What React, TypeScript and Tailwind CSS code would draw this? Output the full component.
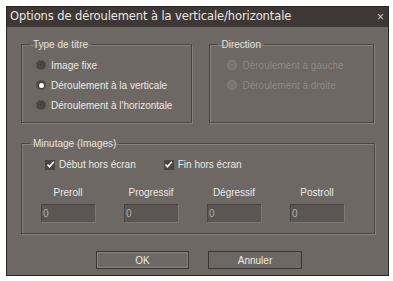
import React from 'react';

const FONT = { fontFamily: '"Liberation Sans", Arial, sans-serif' };

function Radio({
  label,
  checked,
  disabled,
}: {
  label: string;
  checked?: boolean;
  disabled?: boolean;
}) {
  return (
    <div className="flex h-[20px] items-center gap-[5px]">
      <span
        className={`flex h-[10px] w-[10px] items-center justify-center rounded-full ${
          disabled
            ? 'bg-[#7a746f] shadow-[inset_0_0_0_1px_#85807b]'
            : 'bg-[#4a4542] shadow-[inset_0_0_0_1px_#5a5450]'
        }`}
      >
        {checked && <span className="h-[5px] w-[5px] rounded-full bg-white" />}
      </span>
      <span className={disabled ? 'text-[#8d8782]' : 'text-[#ece8e4]'}>
        {label}
      </span>
    </div>
  );
}

function Check({ label }: { label: string }) {
  return (
    <div className="flex items-center gap-[4px]">
      <span className="flex h-[10px] w-[10px] items-center justify-center bg-[#4a4542]">
        <svg width="9" height="9" viewBox="0 0 9 9">
          <path d="M1.5 4.5 L3.5 6.8 L7.8 1.8" fill="none" stroke="#fff" strokeWidth="1.6" />
        </svg>
      </span>
      <span className="text-[#ece8e4]">{label}</span>
    </div>
  );
}

function Group({
  title,
  className,
  children,
}: {
  title: string;
  className?: string;
  children: React.ReactNode;
}) {
  return (
    <fieldset
      className={`border border-[#4b4643] shadow-[1px_1px_0_#86807b,inset_1px_1px_0_#86807b] ${className ?? ''}`}
    >
      <legend className="ml-[8px] px-[3px] leading-[13px] text-[#e4e0dc]">
        {title}
      </legend>
      {children}
    </fieldset>
  );
}

function Field({ label }: { label: string }) {
  return (
    <div className="flex w-[54px] flex-col items-center">
      <span className="mb-[4px] whitespace-nowrap text-[#ece8e4]">{label}</span>
      <div className="flex h-[18px] w-[54px] items-center bg-[#5b5653] px-[2px] text-[#b5afaa] shadow-[inset_1px_1px_0_#4a4542,1px_1px_0_#7d7773]">
        0
      </div>
    </div>
  );
}

export default function App() {
  return (
    <div className="h-[281px] w-[393px] bg-white pl-[6px] pt-[6px] text-[10px]" style={FONT}>
      <div className="flex h-[270px] w-[383px] flex-col border border-[#2a2624] bg-[#6d6863]">
        <div className="flex h-[20px] items-center justify-between bg-[#3d3835] pl-[3px] pr-[4px] text-[#ebe7e3]">
          <span className="font-['DejaVu_Sans',sans-serif] text-[11.5px] tracking-[-0.1px]">
            Options de déroulement à la verticale/horizontale
          </span>
          <span className="text-[12px] text-[#cfcac6]">×</span>
        </div>

        <div className="flex flex-col px-[14px] pt-[11px]">
          <div className="flex gap-[17px]">
            <Group title="Type de titre" className="h-[85px] w-[172px]">
              <div className="flex flex-col pl-[14px] pt-[4px]">
                <Radio label="Image fixe" />
                <Radio label="Déroulement à la verticale" checked />
                <Radio label="Déroulement à l'horizontale" />
              </div>
            </Group>
            <Group title="Direction" className="h-[85px] w-[165px]">
              <div className="flex flex-col pl-[17px] pt-[4px]">
                <Radio label="Déroulement à gauche" disabled />
                <Radio label="Déroulement à droite" disabled />
              </div>
            </Group>
          </div>

          <Group title="Minutage (Images)" className="mt-[14px] h-[97px] w-[354px]">
            <div className="flex gap-[28px] pl-[23px] pt-[7px]">
              <Check label="Début hors écran" />
              <Check label="Fin hors écran" />
            </div>
            <div className="mt-[13px] flex gap-[29px] pl-[19px]">
              <Field label="Preroll" />
              <Field label="Progressif" />
              <Field label="Dégressif" />
              <Field label="Postroll" />
            </div>
          </Group>

          <div className="mt-[17px] flex justify-center gap-[19px] pl-[3px]">
            <button className="h-[18px] w-[93px] border border-[#3a3532] text-[#ece8e4] shadow-[inset_0_0_0_1px_#8a847f]">
              OK
            </button>
            <button className="h-[18px] w-[94px] border border-[#3a3532] text-[#ece8e4]">
              Annuler
            </button>
          </div>
        </div>
      </div>
    </div>
  );
}
